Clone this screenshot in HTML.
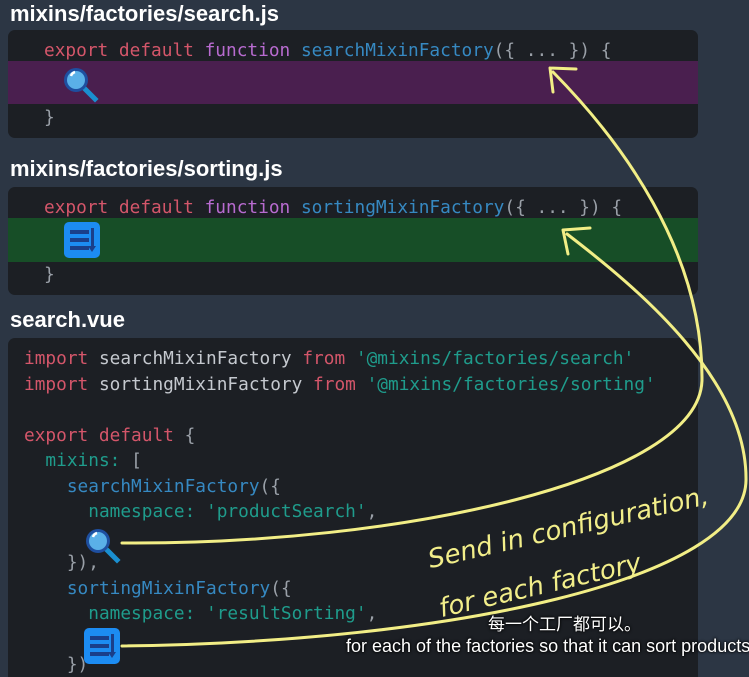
<!DOCTYPE html>
<html style="width:749px;height:677px;overflow:hidden"><head><meta charset="utf-8"><style>
body{margin:0;width:749px;height:677px;overflow:hidden;background:#2c3644;position:relative;font-family:"Liberation Sans",sans-serif}
.t{position:absolute;left:10px;color:#fff;font-weight:bold;font-size:22px;line-height:26px}
.box{position:absolute;left:8px;width:690px;background:#1c1f24;border-radius:7px;overflow:hidden}
.l{position:absolute;white-space:pre;font-family:"DejaVu Sans Mono","Liberation Mono",monospace;font-size:17.8px;line-height:22px;color:#c5c9cf}
.r{color:#d4566a}.p{color:#b86bd0}.b{color:#3689c2}.g{color:#1f9c8c}.d{color:#9aa0a8}
.band{position:absolute;left:0;width:100%}
.sub{position:absolute;color:#fff;white-space:nowrap;text-shadow:0 0 2px #000,0 0 3px #000}
.hw{position:absolute;color:#f2ee8a;font-family:"DejaVu Sans","Liberation Sans",sans-serif;font-style:italic;font-size:26px;white-space:nowrap;transform-origin:left bottom}
</style></head><body>
<div class="t" style="top:1px">mixins/factories/search.js</div>
<div class="box" style="top:30px;height:108px">
 <div class="band" style="top:31px;height:43px;background:#4a1f4f"></div>
 <div class="l" style="left:36px;top:10px"><span class="r">export default</span> <span class="p">function</span> <span class="b">searchMixinFactory</span><span class="d">({ ... }) {</span></div>
 <div class="l d" style="left:36px;top:77px">}</div>
</div>
<div class="t" style="top:156px">mixins/factories/sorting.js</div>
<div class="box" style="top:187px;height:108px">
 <div class="band" style="top:31px;height:44px;background:#174e27"></div>
 <div class="l" style="left:36px;top:10px"><span class="r">export default</span> <span class="p">function</span> <span class="b">sortingMixinFactory</span><span class="d">({ ... }) {</span></div>
 <div class="l d" style="left:36px;top:77px">}</div>
</div>
<div class="t" style="top:307px">search.vue</div>
<div class="box" style="top:338px;height:360px">
 <div class="l" style="left:16px;top:10px"><span class="r">import</span> searchMixinFactory <span class="r">from</span> <span class="g">'@mixins/factories/search'</span></div>
 <div class="l" style="left:16px;top:36px"><span class="r">import</span> sortingMixinFactory <span class="r">from</span> <span class="g">'@mixins/factories/sorting'</span></div>
 <div class="l" style="left:16px;top:87px"><span class="r">export default</span> <span class="d">{</span></div>
 <div class="l" style="left:16px;top:112px">  <span class="g">mixins:</span> <span class="d">[</span></div>
 <div class="l" style="left:16px;top:138px">    <span class="b">searchMixinFactory</span><span class="d">({</span></div>
 <div class="l" style="left:16px;top:163px">      <span class="g">namespace: 'productSearch'</span><span class="d">,</span></div>
 <div class="l d" style="left:16px;top:214px">    }),</div>
 <div class="l" style="left:16px;top:240px">    <span class="b">sortingMixinFactory</span><span class="d">({</span></div>
 <div class="l" style="left:16px;top:265px">      <span class="g">namespace: 'resultSorting'</span><span class="d">,</span></div>
 <div class="l d" style="left:16px;top:316px">    })</div>
</div>
<svg width="749" height="677" style="position:absolute;left:0;top:0">
 <defs>
  <g id="mag"><line x1="9" y1="9" x2="19" y2="19" stroke="#1a8fd0" stroke-width="5" stroke-linecap="square"/><circle cx="0" cy="0" r="12" fill="#1e4fa0"/><circle cx="0" cy="0" r="9" fill="#5ab0e8"/><path d="M-5,-4 a6,6 0 0 1 4,-4" stroke="#fff" stroke-width="2.5" fill="none"/></g>
  <g id="sort"><rect x="0" y="0" width="36" height="36" rx="5" fill="#1c8cf2"/><rect x="6" y="8" width="19" height="4" fill="#1a3f8a"/><rect x="6" y="16" width="19" height="4" fill="#1a3f8a"/><rect x="6" y="24" width="19" height="4" fill="#1a3f8a"/><rect x="27" y="6" width="3" height="20" fill="#1a3f8a"/><path d="M24,24 L32,24 L28,30 Z" fill="#1a3f8a"/></g>
 </defs>
 <use href="#mag" x="76" y="80"/>
 <use href="#sort" x="64" y="222"/>
 <use href="#mag" x="98" y="541"/>
 <use href="#sort" x="84" y="628"/>
 <g stroke="#f2ee86" fill="none" stroke-width="3" stroke-linecap="round">
  <path d="M122,543 C400,545 700,480 702,380 C703,250 620,140 553,72"/>
  <path d="M550,68 L576,69 M550,68 L553,92"/>
  <path d="M122,646 C450,642 745,580 746,480 C747,380 640,290 567,234"/>
  <path d="M563,230 L590,228 M563,230 L568,254"/>
 </g>
</svg>
<div class="hw" style="left:432px;top:545px;transform:rotate(-13deg)">Send in configuration,</div>
<div class="hw" style="left:443px;top:594px;transform:rotate(-13deg)">for each factory</div>
<div class="sub" style="left:488px;top:610px;font-family:'Liberation Sans','Noto Sans CJK SC',sans-serif;font-size:17px">每一个工厂都可以。</div>
<div class="sub" style="left:346px;top:636px;font-size:18px">for each of the factories so that it can sort products</div>
</body></html>
